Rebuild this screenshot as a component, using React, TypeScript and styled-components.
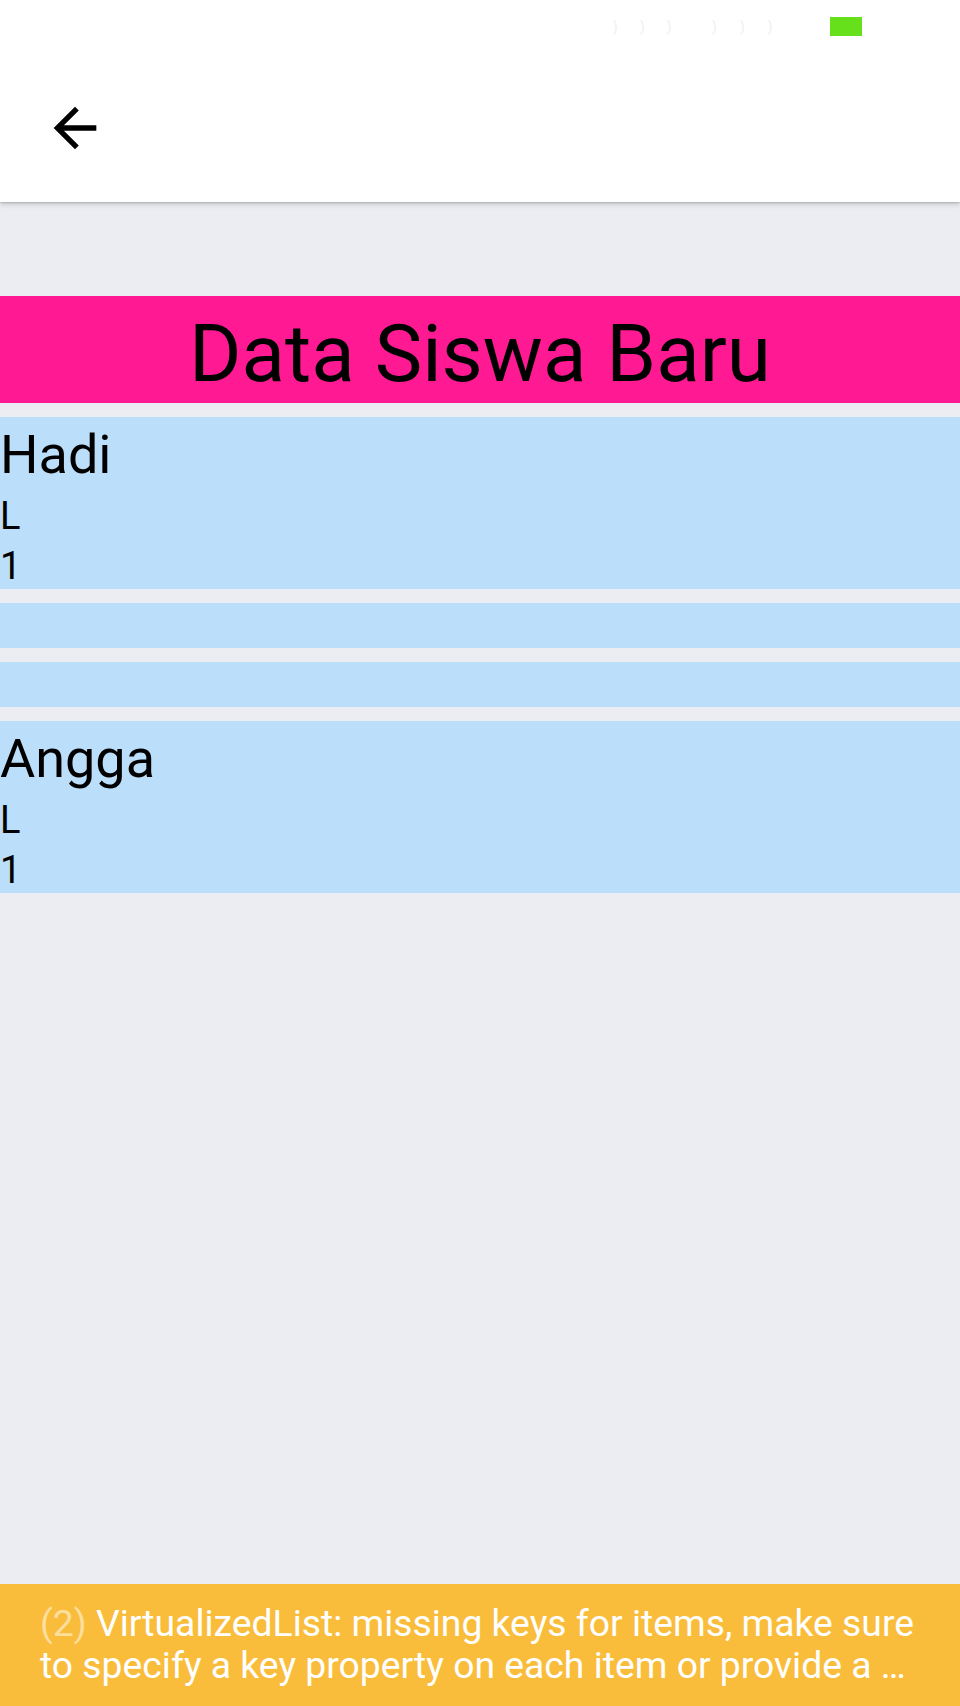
import React from "react";
import styled, { createGlobalStyle } from "styled-components";

const GlobalStyle = createGlobalStyle`
  html, body {
    margin: 0;
    padding: 0;
    background: #ebedf2;
  }
  body {
    font-family: Roboto, "Noto Sans", "Liberation Sans", sans-serif;
  }
  * { box-sizing: border-box; }
`;

const Screen = styled.div`
  position: relative;
  width: 960px;
  height: 1706px;
  overflow: hidden;
  background: #ebedf2;
  display: flex;
  flex-direction: column;
`;

const Header = styled.header`
  display: flex;
  flex-direction: column;
  background: #ffffff;
  height: 202px;
  box-shadow: 0 1px 2px rgba(0, 0, 0, 0.18), 0 3px 5px rgba(0, 0, 0, 0.12);
  position: relative;
  z-index: 1;
`;

const StatusBar = styled.div`
  height: 52px;
  display: flex;
  align-items: center;
  justify-content: flex-end;
  padding-right: 98px;
`;

const FaintGroup = styled.span<{ $w: number; $mr: number }>`
  width: ${(p) => p.$w}px;
  margin-right: ${(p) => p.$mr}px;
  display: flex;
  justify-content: space-between;
  align-items: center;
  color: #f1f1f1;
  font-size: 16px;
  font-family: "DejaVu Sans", sans-serif;
`;

const Battery = styled.span`
  width: 32px;
  height: 19px;
  background: #66e01a;
  display: block;
`;

const AppBar = styled.div`
  flex: 1;
  display: flex;
  align-items: center;
  padding-left: 43px;
`;

const BackButton = styled.button`
  border: 0;
  background: transparent;
  padding: 0;
  width: 64px;
  height: 64px;
  display: flex;
  align-items: center;
  justify-content: center;
  margin-top: 2px;
`;

const Content = styled.main`
  display: flex;
  flex-direction: column;
  padding-top: 94px;
`;

const TitleBanner = styled.h1`
  margin: 0;
  background: #ff1a94;
  color: #000;
  font-family: Roboto, sans-serif;
  font-weight: 400;
  font-size: 80px;
  height: 107px;
  padding-top: 10px;
  line-height: 97px;
  text-align: center;
`;

const List = styled.div`
  display: flex;
  flex-direction: column;
  gap: 14px;
  padding-top: 14px;
`;

const Row = styled.div`
  background: #bbdefa;
  display: flex;
  flex-direction: column;
  height: 172px;
`;

const EmptyRow = styled.div`
  background: #bbdefa;
  height: 45px;
`;

const Name = styled.div`
  font-size: 54px;
  line-height: 69px;
  padding-top: 3px;
  color: #000;
`;

const Detail = styled.div`
  font-size: 38px;
  line-height: 45px;
  padding-top: 5px;
  color: #000;
`;

const YellowBox = styled.div`
  position: absolute;
  left: 0;
  right: 0;
  bottom: 0;
  height: 122px;
  background: rgba(250, 186, 48, 0.95);
  padding: 18px 38px 0 40px;
`;

const Message = styled.p`
  margin: 0;
  color: #ffffff;
  font-family: Roboto, sans-serif;
  font-size: 37.3px;
  line-height: 42px;
`;

const Count = styled.span`
  color: rgba(255, 255, 255, 0.5);
`;

const ArrowBack = () => (
  <svg width="64" height="64" viewBox="0 0 24 24" aria-hidden="true">
    <path
      d="M20 11H7.83l5.59-5.59L12 4l-8 8 8 8 1.41-1.41L7.83 13H20v-2z"
      fill="#000"
    />
  </svg>
);

type Siswa = { nama: string; jk: string; kelas: string };

const data: (Siswa | null)[] = [
  { nama: "Hadi", jk: "L", kelas: "1" },
  null,
  null,
  { nama: "Angga", jk: "L", kelas: "1" },
];

export default function App() {
  return (
    <>
      <GlobalStyle />
      <Screen>
        <Header>
          <StatusBar>
            <FaintGroup $w={60} $mr={39}>
              <span>)</span>
              <span>)</span>
              <span>)</span>
            </FaintGroup>
            <FaintGroup $w={62} $mr={57}>
              <span>)</span>
              <span>)</span>
              <span>)</span>
            </FaintGroup>
            <Battery />
          </StatusBar>
          <AppBar>
            <BackButton aria-label="Kembali">
              <ArrowBack />
            </BackButton>
          </AppBar>
        </Header>
        <Content>
          <TitleBanner>Data Siswa Baru</TitleBanner>
          <List>
            {data.map((s, i) =>
              s ? (
                <Row key={i}>
                  <Name>{s.nama}</Name>
                  <Detail>{s.jk}</Detail>
                  <Detail>{s.kelas}</Detail>
                </Row>
              ) : (
                <EmptyRow key={i} />
              )
            )}
          </List>
        </Content>
        <YellowBox>
          <Message>
            <Count>(2)</Count> VirtualizedList: missing keys for items, make sure
            to specify a key property on each item or provide a …
          </Message>
        </YellowBox>
      </Screen>
    </>
  );
}
